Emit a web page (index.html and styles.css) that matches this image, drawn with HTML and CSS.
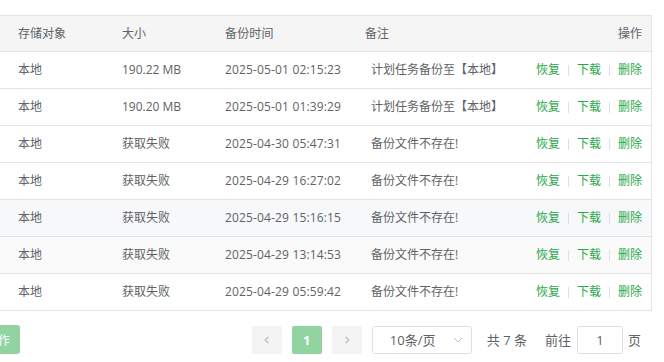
FILE: index.html
```html
<!DOCTYPE html>
<html lang="zh-CN">
<head>
<meta charset="utf-8">
<title>备份列表</title>
<link rel="stylesheet" href="styles.css">
</head>
<body>
<div class="page">
  <div class="table">
    <div class="row head">
      <div class="cell c1">存储对象</div>
      <div class="cell c2">大小</div>
      <div class="cell c3">备份时间</div>
      <div class="cell c4">备注</div>
      <div class="cell c5">操作</div>
    </div>
    <div class="row">
      <div class="cell c1">本地</div>
      <div class="cell c2">190.22 MB</div>
      <div class="cell c3">2025-05-01 02:15:23</div>
      <div class="cell c4 note">计划任务备份至【本地】</div>
      <div class="cell c5"><span class="ops"><a>恢复</a><i class="sep"></i><a>下载</a><i class="sep"></i><a>删除</a></span></div>
    </div>
    <div class="row">
      <div class="cell c1">本地</div>
      <div class="cell c2">190.20 MB</div>
      <div class="cell c3">2025-05-01 01:39:29</div>
      <div class="cell c4 note">计划任务备份至【本地】</div>
      <div class="cell c5"><span class="ops"><a>恢复</a><i class="sep"></i><a>下载</a><i class="sep"></i><a>删除</a></span></div>
    </div>
    <div class="row">
      <div class="cell c1">本地</div>
      <div class="cell c2">获取失败</div>
      <div class="cell c3">2025-04-30 05:47:31</div>
      <div class="cell c4 note">备份文件不存在!</div>
      <div class="cell c5"><span class="ops"><a>恢复</a><i class="sep"></i><a>下载</a><i class="sep"></i><a>删除</a></span></div>
    </div>
    <div class="row">
      <div class="cell c1">本地</div>
      <div class="cell c2">获取失败</div>
      <div class="cell c3">2025-04-29 16:27:02</div>
      <div class="cell c4 note">备份文件不存在!</div>
      <div class="cell c5"><span class="ops"><a>恢复</a><i class="sep"></i><a>下载</a><i class="sep"></i><a>删除</a></span></div>
    </div>
    <div class="row hover">
      <div class="cell c1">本地</div>
      <div class="cell c2">获取失败</div>
      <div class="cell c3">2025-04-29 15:16:15</div>
      <div class="cell c4 note">备份文件不存在!</div>
      <div class="cell c5"><span class="ops"><a>恢复</a><i class="sep"></i><a>下载</a><i class="sep"></i><a>删除</a></span></div>
    </div>
    <div class="row stripe">
      <div class="cell c1">本地</div>
      <div class="cell c2">获取失败</div>
      <div class="cell c3">2025-04-29 13:14:53</div>
      <div class="cell c4 note">备份文件不存在!</div>
      <div class="cell c5"><span class="ops"><a>恢复</a><i class="sep"></i><a>下载</a><i class="sep"></i><a>删除</a></span></div>
    </div>
    <div class="row">
      <div class="cell c1">本地</div>
      <div class="cell c2">获取失败</div>
      <div class="cell c3">2025-04-29 05:59:42</div>
      <div class="cell c4 note">备份文件不存在!</div>
      <div class="cell c5"><span class="ops"><a>恢复</a><i class="sep"></i><a>下载</a><i class="sep"></i><a>删除</a></span></div>
    </div>
  </div>

  <div class="footer">
    <button class="batch">批量操作</button>
    <div class="pager">
      <button class="pbtn"><svg width="10" height="10" viewBox="0 0 10 10"><path d="M6.5 1.8 L3.3 5 L6.5 8.2" fill="none" stroke="#c0c4cc" stroke-width="1.6"/></svg></button>
      <button class="pbtn active">1</button>
      <button class="pbtn"><svg width="10" height="10" viewBox="0 0 10 10"><path d="M3.5 1.8 L6.7 5 L3.5 8.2" fill="none" stroke="#c0c4cc" stroke-width="1.6"/></svg></button>
      <div class="select">
        <span class="sel-text">10条/页</span>
        <svg class="sel-arrow" width="10" height="6" viewBox="0 0 10 6"><path d="M1 1 L5 5 L9 1" fill="none" stroke="#c0c4cc" stroke-width="1"/></svg>
      </div>
      <span class="total">共 7 条</span>
      <span class="jump">前往<span class="jump-input">1</span>页</span>
    </div>
  </div>
</div>
</body>
</html>
```
FILE: styles.css
```css
html, body {
  margin: 0;
  padding: 0;
  background: #fff;
}
body {
  font-family: "Open Sans", "Noto Sans CJK SC", sans-serif;
  color: #606266;
  font-size: 12px;
  overflow: hidden;
}
.page {
  width: 652px;
  padding-top: 15px;
}
.table {
  border-top: 1px solid #e4e4e4;
  border-right: 1px solid #e4e4e4;
}
.row {
  display: grid;
  grid-template-columns: 122px 103px 140px 1fr 130px;
  height: 36px;
  border-bottom: 1px solid #e4e4e4;
  align-items: center;
}
.row.head {
  height: 35px;
  background: #f5f5f5;
}
.row.hover {
  background: #f7f8fa;
}
.row.stripe {
  background: #fafafa;
}
.cell {
  white-space: nowrap;
  line-height: 16px;
}
.c1 {
  padding-left: 18px;
}
.c3 {
  letter-spacing: 0.15px;
}
.note {
  padding-left: 6px;
}
.c5 {
  text-align: right;
  padding-right: 9px;
}
.ops {
  display: inline-flex;
  align-items: center;
}
.ops a {
  color: #2ba84a;
  cursor: pointer;
}
.sep {
  display: inline-block;
  width: 1px;
  height: 11px;
  background: #dcdfe6;
  margin: 0 8px;
}
.footer {
  display: flex;
  justify-content: space-between;
  align-items: center;
  margin-top: 14px;
  padding-right: 11px;
}
.batch {
  margin-left: -48px;
  height: 29px;
  padding: 0 10px;
  border: none;
  border-radius: 3px;
  background: #91d3a1;
  color: #fff;
  font-family: "Open Sans", "Noto Sans CJK SC", sans-serif;
  font-size: 12px;
}
.pager {
  display: flex;
  align-items: center;
  font-size: 13px;
}
.pbtn {
  width: 30px;
  height: 28px;
  margin-right: 10px;
  border: none;
  border-radius: 2px;
  background: #f4f4f5;
  color: #c0c4cc;
  display: flex;
  align-items: center;
  justify-content: center;
  padding: 0;
  font-family: "Open Sans", sans-serif;
  font-size: 13px;
  font-weight: bold;
}
.pbtn.active {
  background: #91d3a1;
  color: #fff;
}
.select {
  height: 26px;
  border: 1px solid #dcdfe6;
  border-radius: 3px;
  display: flex;
  align-items: center;
  justify-content: space-between;
  padding: 0 8px 0 17px;
  box-sizing: content-box;
  width: 73px;
  color: #606266;
}
.sel-arrow {
  display: block;
}
.total {
  margin-left: 15px;
  color: #606266;
}
.jump {
  margin-left: 18px;
  display: flex;
  align-items: center;
}
.jump-input {
  width: 44px;
  height: 26px;
  margin: 0 5px 0 6px;
  border: 1px solid #dcdfe6;
  border-radius: 3px;
  display: flex;
  align-items: center;
  justify-content: center;
}
```
